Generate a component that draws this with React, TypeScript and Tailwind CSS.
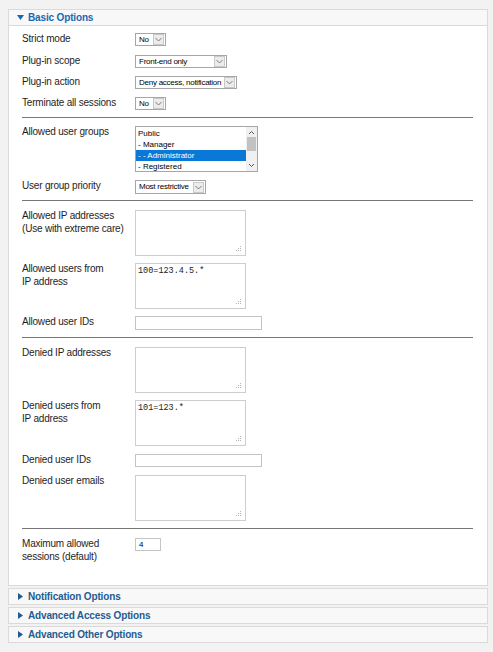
import React from "react";

const labelFont = { fontFamily: '"Liberation Sans", Arial, sans-serif' };

const Select = ({ text, width, height }: { text: string; width: string; height?: string }) => {
  return (
    <div className={`${width} ${height ?? "h-[13px]"} flex items-center bg-white border border-[#a6a6a6]`}>
      <span className="flex-1 pl-[3px] text-[8px] tracking-[-0.25px] text-black leading-none whitespace-nowrap overflow-hidden">
        {text}
      </span>
      <span className="w-[11px] h-[11px] mr-px bg-[#ececec] border border-[#c9c9c9] flex items-center justify-center">
        <svg width="7" height="5" viewBox="0 0 7 5">
          <path d="M0.5 1 L3.5 4 L6.5 1" fill="none" stroke="#7a7a7a" strokeWidth="1" />
        </svg>
      </span>
    </div>
  );
};

const Grip = () => (
  <svg width="6" height="6" viewBox="0 0 6 6" className="absolute right-[3px] bottom-[3px]">
    <rect x="4" y="0" width="1" height="1" fill="#b5b5b5" />
    <rect x="4" y="2" width="1" height="1" fill="#b5b5b5" />
    <rect x="2" y="2" width="1" height="1" fill="#b5b5b5" />
    <rect x="4" y="4" width="1" height="1" fill="#b5b5b5" />
    <rect x="2" y="4" width="1" height="1" fill="#b5b5b5" />
    <rect x="0" y="4" width="1" height="1" fill="#b5b5b5" />
  </svg>
);

const TextArea = ({ value }: { value?: string }) => (
  <div className="relative w-[111px] h-[46px] bg-white border border-[#cdcdcd]">
    {value && (
      <span
        className="absolute left-[2px] top-[3px] text-[8.5px] leading-none text-[#222]"
        style={{ fontFamily: '"Liberation Mono", "Courier New", monospace' }}
      >
        {value}
      </span>
    )}
    <Grip />
  </div>
);

const Input = ({ width, height, value }: { width: string; height?: string; value?: string }) => (
  <div
    className={`${width} ${height ?? "h-[13px]"} bg-white border border-[#c4c4c4] flex items-center pl-[3px] text-[8px] text-black leading-none`}
  >
    {value}
  </div>
);

const Row = ({
  label,
  className,
  children,
}: {
  label: React.ReactNode;
  className?: string;
  children: React.ReactNode;
}) => (
  <div className={`flex items-start ${className ?? ""}`}>
    <div className="w-[113px] text-[10px] tracking-[-0.2px] leading-[13px] text-[#1e1e1e] -mt-[1px]">
      {label}
    </div>
    {children}
  </div>
);

const Separator = ({ className }: { className?: string }) => (
  <div className={`h-px bg-[#777] ${className ?? ""}`} />
);

const ListBox = () => (
  <div className="w-[123px] h-[46px] bg-white border border-[#a6a6a6] flex">
    <div className="flex-1 pt-[1px] text-[8px] leading-[11px] text-black">
      <div className="pl-[2px]">Public</div>
      <div className="pl-[2px]">- Manager</div>
      <div className="pl-[2px] bg-[#0a78d7] text-white">- - Administrator</div>
      <div className="pl-[2px]">- Registered</div>
    </div>
    <div className="w-[11px] bg-[#f0f0f0] flex flex-col items-center">
      <svg width="7" height="10" viewBox="0 0 7 10">
        <path d="M1 7 L3.5 4.5 L6 7" fill="none" stroke="#555" strokeWidth="1" />
      </svg>
      <div className="w-[9px] h-[14px] bg-[#c2c2c2]" />
      <div className="flex-1" />
      <svg width="7" height="10" viewBox="0 0 7 10">
        <path d="M1 3 L3.5 5.5 L6 3" fill="none" stroke="#555" strokeWidth="1" />
      </svg>
    </div>
  </div>
);

const Collapsed = ({ title }: { title: string }) => (
  <div className="mt-[2px] h-[17px] bg-[#f8f8f8] border border-[#dadada] flex items-center">
    <svg width="5" height="7" viewBox="0 0 5 7" className="ml-[9px] mr-[5px]">
      <path d="M0 0 L5 3.5 L0 7 Z" fill="#1f5c93" />
    </svg>
    <span className="text-[10px] font-bold tracking-[-0.15px] text-[#1f5c93] leading-none">{title}</span>
  </div>
);

export default function App() {
  return (
    <div className="min-h-[652px] bg-[#f2f2f2] pt-[9px]" style={labelFont}>
      <div className="w-[480px] ml-[8px]">
        <div className="border border-[#dadada] bg-white">
          <div className="h-[16px] bg-[#f8f8f8] border-b border-[#dadada] flex items-center">
            <svg width="7" height="5" viewBox="0 0 7 5" className="ml-[8px] mr-[4px]">
              <path d="M0 0 L7 0 L3.5 5 Z" fill="#1a68b3" />
            </svg>
            <span className="text-[10px] font-bold tracking-[-0.15px] text-[#1a68b3] leading-none">
              Basic Options
            </span>
          </div>

          <div className="pl-[13px] pr-[14px] pt-[7px] pb-[22px]">
            <Row label="Strict mode">
              <Select text="No" width="w-[31px]" />
            </Row>
            <Row label="Plug-in scope" className="mt-[9px]">
              <Select text="Front-end only" width="w-[92px]" />
            </Row>
            <Row label="Plug-in action" className="mt-[8px]">
              <Select text="Deny access, notification" width="w-[102px]" />
            </Row>
            <Row label="Terminate all sessions" className="mt-[8px]">
              <Select text="No" width="w-[31px]" />
            </Row>

            <Separator className="mt-[7px]" />

            <Row label="Allowed user groups" className="mt-[8px]">
              <ListBox />
            </Row>
            <Row label="User group priority" className="mt-[8px]">
              <Select text="Most restrictive" width="w-[71px]" height="h-[14px]" />
            </Row>

            <Separator className="mt-[6px]" />

            <Row
              label={
                <>
                  Allowed IP addresses
                  <br />
                  (Use with extreme care)
                </>
              }
              className="mt-[9px]"
            >
              <TextArea />
            </Row>
            <Row
              label={
                <>
                  Allowed users from
                  <br />
                  IP address
                </>
              }
              className="mt-[7px]"
            >
              <TextArea value="100=123.4.5.*" />
            </Row>
            <Row label="Allowed user IDs" className="mt-[7px]">
              <Input width="w-[127px]" height="h-[14px]" />
            </Row>

            <Separator className="mt-[7px]" />

            <Row label="Denied IP addresses" className="mt-[9px]">
              <TextArea />
            </Row>
            <Row
              label={
                <>
                  Denied users from
                  <br />
                  IP address
                </>
              }
              className="mt-[7px]"
            >
              <TextArea value="101=123.*" />
            </Row>
            <Row label="Denied user IDs" className="mt-[8px]">
              <Input width="w-[127px]" />
            </Row>
            <Row label="Denied user emails" className="mt-[8px]">
              <TextArea />
            </Row>

            <Separator className="mt-[7px]" />

            <Row
              label={
                <>
                  Maximum allowed
                  <br />
                  sessions (default)
                </>
              }
              className="mt-[9px]"
            >
              <Input width="w-[26px]" value="4" />
            </Row>
          </div>
        </div>

        <Collapsed title="Notification Options" />
        <Collapsed title="Advanced Access Options" />
        <Collapsed title="Advanced Other Options" />
      </div>
    </div>
  );
}
